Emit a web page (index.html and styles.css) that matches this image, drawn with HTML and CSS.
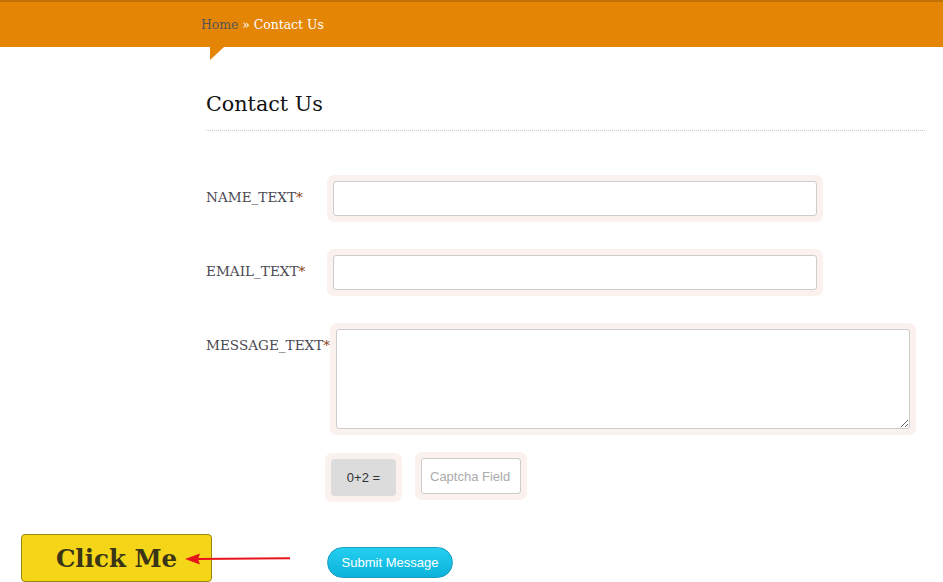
FILE: index.html
```html
<!DOCTYPE html>
<html>
<head>
<meta charset="utf-8">
<link rel="stylesheet" href="styles.css">
</head>
<body>
<header class="topbar">
  <div class="crumbs"><a class="crumb-home">Home</a> » Contact Us</div>
  <span class="tail"></span>
</header>
<main class="content">
  <h1 class="title">Contact Us</h1>
  <form class="form">
    <div class="row">
      <label class="label">NAME_TEXT<span class="req">*</span></label>
      <div class="wrap wrap-short"><input class="field" type="text"></div>
    </div>
    <div class="row">
      <label class="label">EMAIL_TEXT<span class="req">*</span></label>
      <div class="wrap wrap-short"><input class="field" type="text"></div>
    </div>
    <div class="row">
      <label class="label label-msg">MESSAGE_TEXT<span class="req">*</span></label>
      <div class="wrap wrap-long"><textarea class="area"></textarea></div>
    </div>
    <div class="captcha-row">
      <div class="wrap"><div class="sum">0+2 =</div></div>
      <div class="wrap"><input class="cap-field" type="text" placeholder="Captcha Field"></div>
    </div>
    <div class="submit-row">
      <button class="clickme" type="button">Click Me</button>
      <svg class="arrow" width="110" height="14" viewBox="0 0 110 14"><path d="M14 7 L107 6.2" stroke="#e8141b" stroke-width="2" fill="none"/><path d="M2 7 L17 1.5 L15 7 L17 12.5 Z" fill="#e8141b"/></svg>
      <button class="submit" type="button">Submit Message</button>
    </div>
  </form>
</main>
</body>
</html>
```
FILE: styles.css
```css
html, body { margin: 0; padding: 0; background: #fff; }
body { font-family: "DejaVu Serif", serif; }

.topbar {
  position: relative;
  height: 45px;
  background: #e58505;
  border-top: 2px solid #c26f05;
}
.crumbs {
  padding: 15px 0 0 201px;
  font-size: 12.4px;
  color: #fff;
  line-height: 16px;
}
.crumb-home { color: #555; }
.tail {
  position: absolute;
  left: 210px;
  top: 45px;
  width: 0; height: 0;
  border-top: 13px solid #e58505;
  border-right: 14px solid transparent;
}

.content { padding-left: 206px; width: 719px; }
.title {
  margin: 0;
  padding-top: 45px;
  padding-bottom: 14px;
  font-size: 20.7px;
  font-weight: normal;
  line-height: 24px;
  color: #111;
  border-bottom: 1px dotted #c8c8c8;
}
.form { padding-top: 44px; }
.row { display: flex; align-items: flex-start; margin-bottom: 27px; }
.label {
  width: 121px;
  flex: none;
  padding-top: 14px;
  font-size: 13.6px;
  line-height: 17px;
  color: #4a4852;
  white-space: nowrap;
}
.label-msg { width: 124px; }
.req { color: #8a3b12; }
.wrap {
  background: #fbf1ee;
  border-radius: 7px;
  padding: 6px;
  box-sizing: border-box;
}
.wrap-short { width: 496px; }
.wrap-long { width: 586px; }
.field {
  display: block;
  width: 100%;
  height: 35px;
  box-sizing: border-box;
  border: 1px solid #ccc;
  border-radius: 3px;
  background: #fff;
  margin: 0;
}
.area {
  display: block;
  width: 100%;
  height: 100px;
  box-sizing: border-box;
  border: 1px solid #ccc;
  border-radius: 3px;
  margin: 0;
  resize: both;
}
.captcha-row {
  display: flex;
  align-items: flex-start;
  gap: 13px;
  margin-left: 119px;
  margin-top: -9px;
}
.sum {
  width: 65px;
  height: 37px;
  background: #dcdcdc;
  border-radius: 4px;
  font-family: "Liberation Sans", Arial, sans-serif;
  font-size: 13px;
  color: #333;
  display: flex;
  align-items: center;
  justify-content: center;
}
.captcha-row .wrap:last-child { margin-top: -1px; }
.cap-field {
  display: block;
  width: 100px;
  height: 36px;
  box-sizing: border-box;
  border: 1px solid #ccc;
  border-radius: 3px;
  padding: 0 8px;
  font-family: "Liberation Sans", Arial, sans-serif;
  font-size: 13px;
  margin: 0;
}
.cap-field::placeholder { color: #aaa; }

.submit-row {
  position: relative;
  margin-top: 45px;
  padding-left: 121px;
  height: 35px;
}
.submit {
  height: 31px;
  width: 126px;
  border-radius: 16px;
  border: 1px solid #1a9cc0;
  background: linear-gradient(#24cff0, #0cb2da);
  color: #fff;
  font-family: "Liberation Sans", Arial, sans-serif;
  font-size: 13px;
  padding: 0;
}
.clickme {
  position: absolute;
  left: -185px;
  top: -13px;
  width: 191px;
  height: 48px;
  box-sizing: border-box;
  background: #f5d518;
  border: 1px solid #9a8710;
  border-radius: 4px;
  font-family: "DejaVu Serif", serif;
  font-weight: bold;
  font-size: 24.5px;
  color: #3a3516;
  padding: 0;
}
.arrow {
  position: absolute;
  left: -23px;
  top: 5px;
}
```
